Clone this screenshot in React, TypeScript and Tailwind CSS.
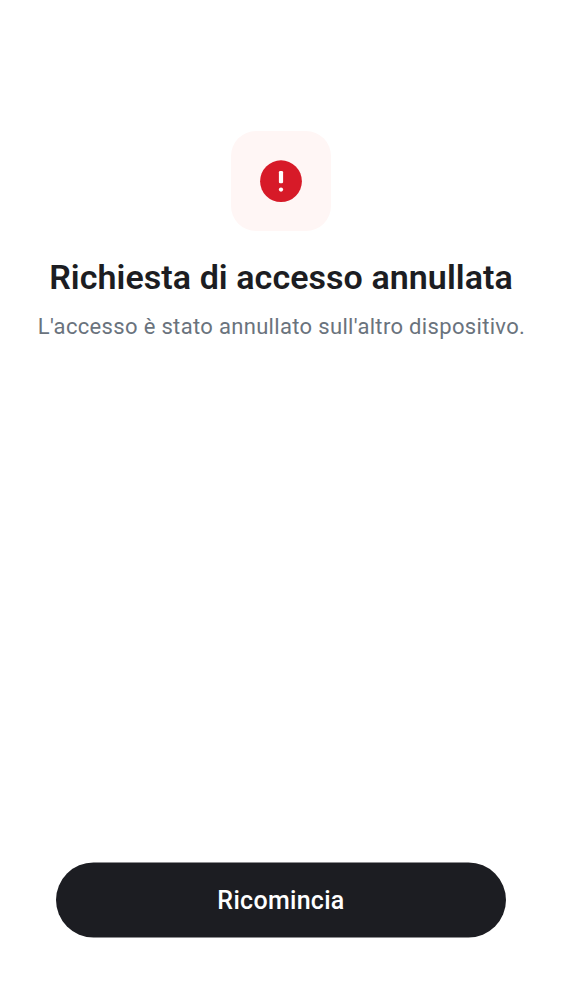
export default function App() {
  return (
    <main className="flex h-[1000px] w-full flex-col items-center bg-white pt-[131px] pb-[63px] font-['Roboto',sans-serif]">
      <div className="flex size-[100px] items-center justify-center rounded-[25px] bg-[#fff6f5]">
        <svg className="size-[50px]" viewBox="0 0 50 50" aria-hidden="true">
          <circle cx="25" cy="25.2" r="20.9" fill="#d71a28" />
          <rect x="22.9" y="15" width="4.2" height="12.3" rx="1.3" fill="#fff" />
          <circle cx="25" cy="33.6" r="2.15" fill="#fff" />
        </svg>
      </div>
      <h1 className="mt-[26px] text-[34px] leading-[40px] font-semibold tracking-[0.06px] whitespace-nowrap text-[#1c1d22]">Richiesta di accesso annullata</h1>
      <p className="mt-[15px] pl-px text-[22px] leading-[30px] tracking-[0.33px] whitespace-nowrap text-[#6a737d]">L'accesso è stato annullato sull'altro dispositivo.</p>
      <button className="mt-auto h-[75px] w-[450px] translate-y-[0.5px] rounded-full bg-[#1c1d22] pt-px text-[25px] font-medium tracking-[0.3px] text-white">Ricomincia</button>
    </main>
  );
}
